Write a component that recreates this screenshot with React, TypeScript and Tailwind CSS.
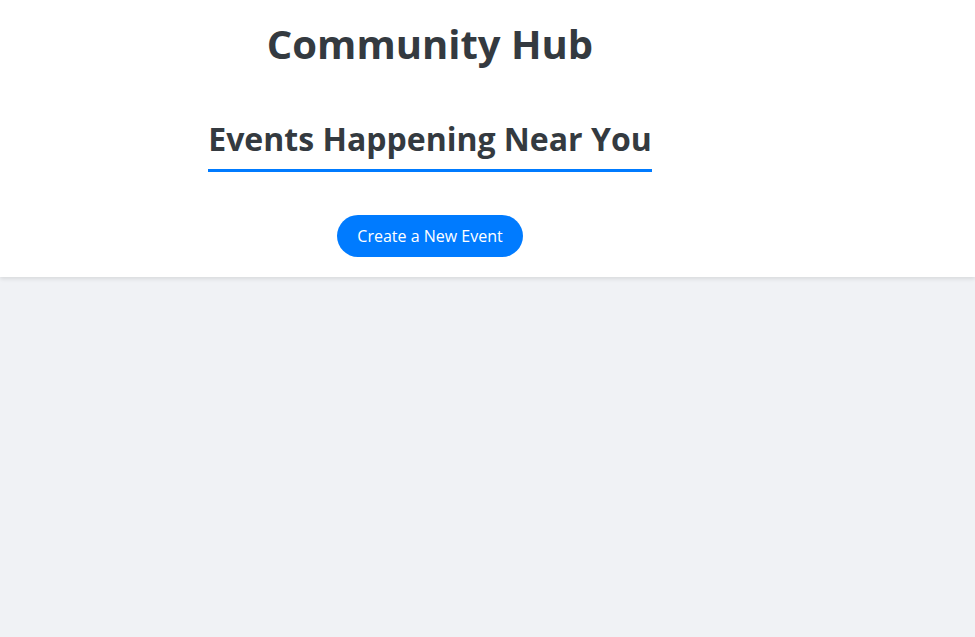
import React from "react";

const App = () => {
  return (
    <div
      className="min-h-screen bg-[#f0f2f5]"
      style={{ fontFamily: '"Open Sans", "Liberation Sans", sans-serif' }}
    >
      <header className="bg-white shadow-[0_2px_4px_rgba(0,0,0,0.1)]">
        <div className="w-[860px] flex flex-col items-center pt-5 pb-5">
          <h1 className="text-[40px] leading-[1.2] font-bold text-[#343a40]">
            Community Hub
          </h1>
          <h2 className="mt-[52px] text-[32px] leading-[1.2] font-bold text-[#343a40] border-b-[3px] border-[#007bff] pb-[11px]">
            Events Happening Near You
          </h2>
          <button className="mt-[43px] bg-[#007bff] text-white text-base leading-[22px] px-5 py-2.5 rounded-full">
            Create a New Event
          </button>
        </div>
      </header>
    </div>
  );
};

export default App;
